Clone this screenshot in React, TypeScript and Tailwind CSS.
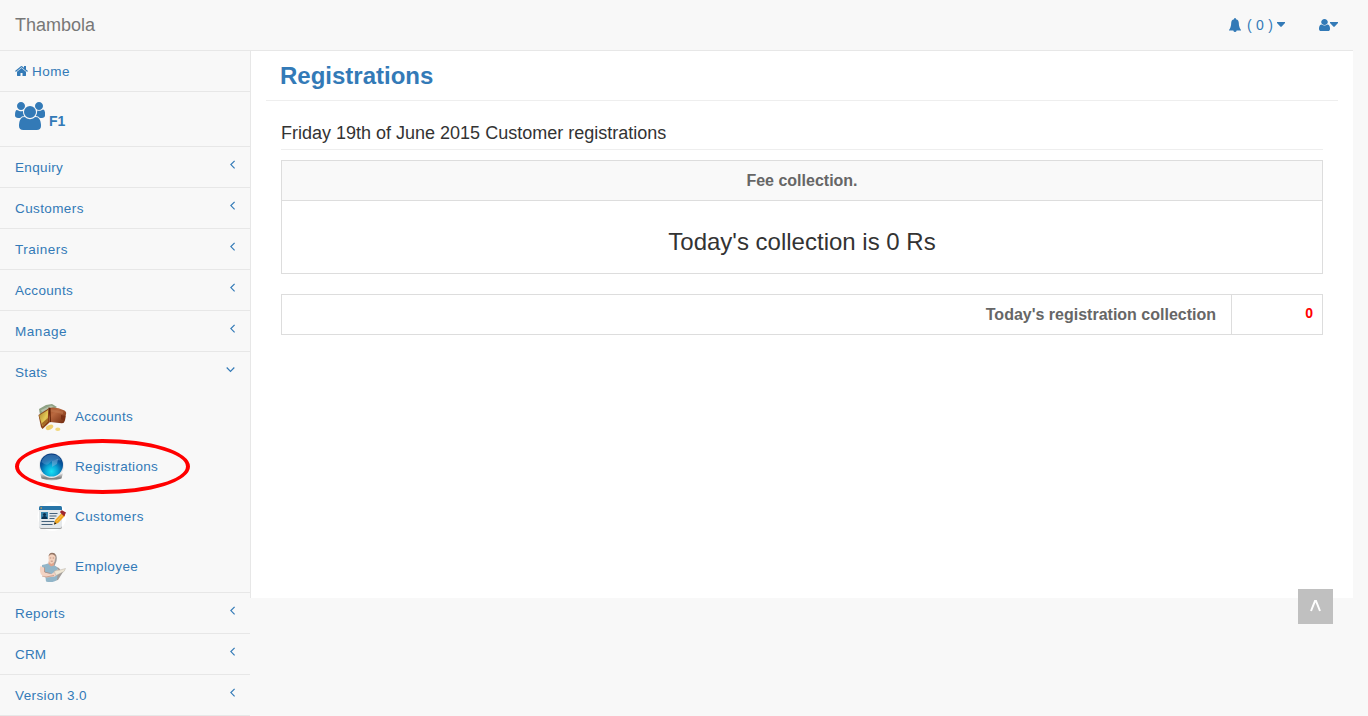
import React from "react";

function Chevron({ open }: { open?: boolean }) {
  return open ? (
    <svg width="9" height="10" viewBox="0 0 9 10" className="mr-[15px] mt-[13px]" fill="none" stroke="#337ab7" strokeWidth="1.2">
      <path d="M0.7 2.5 4.5 6.3 8.3 2.5" />
    </svg>
  ) : (
    <svg width="6" height="10" viewBox="0 0 6 10" className="mr-[14px] mt-[13px]" fill="none" stroke="#337ab7" strokeWidth="1.2">
      <path d="M4.600 0.900 0.900 4.600 4.600 8.300" />
    </svg>
  );
}

function Caret() {
  return (
    <svg width="8" height="5" viewBox="0 0 8 5" fill="#337ab7">
      <path d="M0 0h8v1L4.500 4.700h-1L0 1z" />
    </svg>
  );
}

function HomeIcon() {
  return (
    <svg width="13" height="14" viewBox="0 0 1664 1792" fill="#337ab7">
      <path d="M1408 992v480q0 26-19 45t-45 19h-384v-384h-256v384h-384q-26 0-45-19t-19-45v-480q0-1 .5-3t.5-3l575-474 575 474q1 2 1 6zm223-69l-62 74q-8 9-21 11h-3q-13 0-21-7l-692-577-692 577q-12 8-24 7-13-2-21-11l-62-74q-8-10-7-23.500t11-21.500l719-599q32-26 76-26t76 26l244 204v-195q0-14 9-23t23-9h192q14 0 23 9t9 23v408l219 182q10 8 11 21.500t-7 23.500z" />
    </svg>
  );
}

function UsersIcon() {
  return (
    <svg width="30" height="28" viewBox="0 -256 1920 1792" fill="#337ab7">
      <path d="M593 640q-162 5-265 128h-134q-82 0-138-40.500t-56-118.500q0-353 124-353 6 0 43.500 21t97.500 42.500 119 21.500q67 0 133-23-5 37-5 66 0 159 92 293zm1071 637q0 120-73 189.500t-194 69.500h-874q-121 0-194-69.500t-73-189.500q0-53 3.500-103.500t14-109 26.500-108.500 43-97.500 62-81 85.500-53.500 111.500-20q10 0 43 21.500t73 48 107 48 135 21.500 135-21.500 107-48 73-48 43-21.500q61 0 111.500 20t85.500 53.500 62 81 43 97.500 26.500 108.500 14 109 3.500 103.500zm-1024-1277q0 106-75 181t-181 75-181-75-75-181 75-181 181-75 181 75 75 181zm704 384q0 159-112.500 271.500t-271.500 112.500-271.500-112.500-112.500-271.500 112.500-271.500 271.500-112.500 271.500 112.500 112.500 271.500zm576 225q0 78-56 118.500t-138 40.500h-134q-103-123-265-128 92-134 92-293 0-29-5-66 66 23 133 23 59 0 119-21.500t97.500-42.500 43.500-21q124 0 124 353zm-128-609q0 106-75 181t-181 75-181-75-75-181 75-181 181-75 181 75 75 181z" />
    </svg>
  );
}

function UserIcon() {
  return (
    <svg width="11" height="14" viewBox="0 0 1280 1792" preserveAspectRatio="none" fill="#337ab7">
      <path d="M1280 1399q0 109-62.500 187t-150.500 78h-854q-88 0-150.500-78t-62.500-187q0-85 8.500-160.500t31.500-152 58.500-131 94-89 134.500-34.500q131 128 313 128t313-128q76 0 134.500 34.500t94 89 58.500 131 31.500 152 8.500 160.500zm-256-887q0 159-112.500 271.500t-271.500 112.500-271.500-112.500-112.500-271.500 112.500-271.500 271.500-112.500 271.500 112.500 112.500 271.500z" />
    </svg>
  );
}

function BellIcon() {
  return (
    <svg width="12" height="14" viewBox="0 0 12 14" fill="#337ab7">
      <path d="M5 1.200Q5 0 6 0t1 1.200C9 1.700 9.700 3 9.800 5c.1 2.500.5 4 1.200 5.400L12 12v.6H0V12l1-1.600C1.700 9 2.100 7.500 2.200 5 2.300 3 3 1.700 5 1.200zM4.300 12.500h3.400Q7.300 14 6 14t-1.700-1.500z" />
    </svg>
  );
}

function WalletIcon() {
  return (
    <svg width="30" height="30" viewBox="0 0 30 30">
      <defs>
        <linearGradient id="leather" x2="1" y2="1">
          <stop stopColor="#a4552c" />
          <stop offset=".35" stopColor="#b9683f" />
          <stop offset="1" stopColor="#6b260c" />
        </linearGradient>
        <linearGradient id="lining" x2="1" y2="1">
          <stop stopColor="#a5812a" />
          <stop offset=".6" stopColor="#e5ca58" />
          <stop offset="1" stopColor="#a77828" />
        </linearGradient>
      </defs>
      <path d="M2 7 9 3l6-1 5 3-6 4-11 4z" fill="#8fa285" />
      <path d="M4 8 14 3.500l3 1.500L5 10z" fill="#b4c1aa" />
      <path d="M1.500 13 11.500 6.500 13 20 5.500 27 4 25z" fill="#8c4219" />
      <path d="M2 13.500 11 8v11l-5.500 5.500z" fill="url(#lining)" />
      <path d="m5 21 6-5v3l-5.500 5.500z" fill="#a46a25" />
      <path d="M11.500 6q8-1.500 16 2.500 1.800 1 1.700 2.500l-1.500 8q-.5 2.500-3 2.300L13 20z" fill="url(#leather)" />
      <path d="m13 7 13 2.500V12L13 9.500z" fill="#c47b52" opacity=".5" />
      <path d="m24 13 4.500 1-.5 4.500-4-1z" fill="#7b3015" />
      <path d="M11.500 5.500 13 20l1 .3L13.500 6z" fill="#642509" />
      <ellipse cx="12.500" cy="25.300" rx="4" ry="2.300" fill="#efcf6e" transform="rotate(-25 12.500 25.300)" />
      <ellipse cx="20.800" cy="27.300" rx="2.600" ry="1.700" fill="#f2d77b" />
    </svg>
  );
}

function OrbIcon() {
  return (
    <svg width="30" height="30" viewBox="0 0 30 30">
      <defs>
        <radialGradient id="orb" cx=".5" cy=".78" r=".78">
          <stop stopColor="#18e2f4" />
          <stop offset=".35" stopColor="#0aa5d5" />
          <stop offset=".65" stopColor="#07599f" />
          <stop offset="1" stopColor="#06357a" />
        </radialGradient>
        <linearGradient id="stand" x2="0" y2="1">
          <stop stopColor="#eee" />
          <stop offset=".7" stopColor="#777" />
          <stop offset="1" stopColor="#ccc" />
        </linearGradient>
      </defs>
      <path d="M3 21q12 6 23 0l-1.500 5.500q-10 4-20 0z" fill="url(#stand)" />
      <circle cx="14.500" cy="13.500" r="12.500" fill="#e3e6e8" />
      <circle cx="14.500" cy="13" r="11.500" fill="url(#orb)" />
      <path d="M4.500 10Q7 2.200 14.500 2.500q8 0 9.500 6-8-2-12 3-3 3-7.500-1.500z" fill="#76b5e3" opacity=".35" />
      <path d="m15 9 6-2-1 5-5 3" fill="#88b9dd" opacity=".5" />
    </svg>
  );
}

function CardIcon() {
  return (
    <svg width="30" height="30" viewBox="0 0 30 30">
      <circle cx="15" cy="14.500" r="14.500" fill="#fff" />
      <rect x="2.500" y="6" width="22.500" height="21" rx="2" fill="#999" />
      <rect x="2" y="4" width="23" height="22" rx="2" fill="#e5e8ea" />
      <path d="M2 8V5.500Q2 4 3.500 4h20Q25 4 25 5.500V8z" fill="#2875a8" />
      <circle cx="4.200" cy="6" r=".8" fill="#f4a638" />
      <rect x="4" y="10" width="7" height="7" fill="#3b86ae" />
      <circle cx="7.500" cy="12.500" r="1.600" fill="#0b3150" />
      <path d="M4.700 17q0-3 2.800-3t2.800 3" fill="#0b3150" />
      <path d="M12.500 11.500h8m-8 2.500h7m-7 2.500h5M4.500 19.500h13M4.500 22.500h11" stroke="#44627c" strokeWidth="1" />
      <path d="m17 22.500 1.200-4.500 7-7.500 3 3-7 7.500z" fill="#f0a51d" />
      <path d="m19.500 19.300 7-7.500" stroke="#ffc45a" />
      <path d="m23.500 9 1.500-.8 4 2.300-1.800 4-4-4z" fill="#9d2730" />
      <path d="m17 22.500 .7-2.500 1.800 1.800z" fill="#222" />
    </svg>
  );
}

function EmployeeIcon() {
  return (
    <svg width="30" height="30" viewBox="0 0 30 30">
      <path d="M16 1q5 1 3.500 8l-2 5 4.500 2 2 3 2 1-5 8-8 1.500-2-8z" fill="#8b8581" opacity=".8" />
      <path d="M12 8h5v6l-3 3-3-4z" fill="#dfa48c" />
      <path d="M5 13q4-1 6-1.500l3 3 3-1q4 1 4 5l-1 9.500q-5 3.500-11 1.500L8 21l-3-4z" fill="#92b5c8" />
      <path d="M11.500 6q0-5 3.500-5t3.500 4l-1 5-3 2q-3-1-3-6z" fill="#f3d1bd" />
      <path d="M11.500 4.500q.5-3.500 3.500-3.800 4 0 3.800 4.300-1.500-2.700-3.800-2.700-2 0-3.500 2.200z" fill="#927565" />
      <path d="M12.800 6h1.400m1.500 0h1.400M13.800 9.200h2" stroke="#9b6759" strokeWidth=".6" />
      <path d="m3.500 14 4 2v4.500l7 1.500 6-4.500 3 1-5.500 6-8.500 1-5.500-3q-2-4.500-.5-8.500z" fill="#f4d3c3" />
      <path d="m17 19 6-1 5.500-1.500-1.500 3-8 4z" fill="#eee6d5" stroke="#aaa297" strokeWidth=".4" />
      <path d="m5 24 4 1 8-1.500m-9.500-8L7.500 20l6 1.500" stroke="#b77d68" fill="none" strokeWidth=".6" />
    </svg>
  );
}

function Row({ label, spacing, open }: { label: string; spacing: string; open?: boolean }) {
  return (
    <div className={`flex h-10 justify-between pl-[15px] ${open ? "" : "box-content border-b border-[#e7e7e7]"}`}>
      <span className={`pt-[11px] leading-5 ${spacing}`}>{label}</span>
      <Chevron open={open} />
    </div>
  );
}

function SubRow({ label, spacing, children }: { label: string; spacing: string; children: React.ReactNode }) {
  return (
    <div className="flex h-[50px] items-start pl-[37px] pt-[10px]">
      <span>{children}</span>
      <span className={`ml-2 mt-[5px] leading-5 ${spacing}`}>{label}</span>
    </div>
  );
}

export default function App() {
  return (
    <div className="h-[716px] w-[1368px] overflow-hidden bg-[#f8f8f8] font-['Liberation_Sans',Arial,sans-serif] text-[13.5px] text-[#337ab7]">
      <header className="flex h-[51px] w-[1353px] border-b border-[#e7e7e7]">
        <span className="pl-[15px] pt-[15px] text-[18px] leading-5 text-[#777]">Thambola</span>
        <div className="ml-auto flex pr-[15px]">
          <span className="mt-[18px]"><BellIcon /></span>
          <span className="ml-[6px] mt-[15px] w-[27px] whitespace-nowrap text-[14px] leading-5 tracking-[0.25px]">( 0 )</span>
          <span className="ml-[3px] mt-[22px]"><Caret /></span>
          <span className="ml-[34px] mt-[18px]"><UserIcon /></span>
          <span className="mt-[22px]"><Caret /></span>
        </div>
      </header>
      <div className="flex items-start">
        <nav className="relative w-[250px] shrink-0">
          <div className="flex h-[41px] border-b border-[#e7e7e7] pl-[15px] pt-[11px]">
            <span className="mt-[2px]"><HomeIcon /></span>
            <span className="ml-1 leading-5 tracking-[0.52px]">Home</span>
          </div>
          <div className="flex h-[55px] border-b border-[#e7e7e7] pl-[15px] pt-[10px]">
            <UsersIcon />
            <b className="ml-1 mt-[9px] text-[14px] leading-5">F1</b>
          </div>
          <Row label="Enquiry" spacing="tracking-[0.34px]" />
          <Row label="Customers" spacing="tracking-[0.39px]" />
          <Row label="Trainers" spacing="tracking-[0.5px]" />
          <Row label="Accounts" spacing="tracking-[0.31px]" />
          <Row label="Manage" spacing="tracking-[0.54px]" />
          <Row label="Stats" spacing="tracking-[0.32px]" open />
          <div className="h-[201px] border-b border-[#e7e7e7]">
            <SubRow label="Accounts" spacing="tracking-[0.31px]"><WalletIcon /></SubRow>
            <SubRow label="Registrations" spacing="tracking-[0.34px]"><OrbIcon /></SubRow>
            <SubRow label="Customers" spacing="tracking-[0.39px]"><CardIcon /></SubRow>
            <SubRow label="Employee" spacing="tracking-[0.4px]"><EmployeeIcon /></SubRow>
          </div>
          <Row label="Reports" spacing="tracking-[0.4px]" />
          <Row label="CRM" spacing="tracking-[0.15px]" />
          <Row label="Version 3.0" spacing="tracking-[0.4px]" />
          <div className="absolute left-[15px] top-[388px] h-[55px] w-[175px] rounded-[50%] border-4 border-[#f00]" />
        </nav>
        <main className="h-[547px] w-[1103px] border-l border-[#e7e7e7] bg-white px-[15px] text-[#333]">
          <h1 className="h-[50px] border-b border-[#eee] pl-[14px] pt-[10px] text-[24px] font-bold leading-[30px] text-[#337ab7]">Registrations</h1>
          <div className="px-[15px] pt-[22px]">
            <h2 className="h-[27px] border-b border-[#eee] text-[18px] leading-5">Friday 19th of June 2015 Customer registrations</h2>
            <section className="mt-[10px] h-[114px] border border-[#ddd] text-center">
              <div className="h-10 border-b border-[#ddd] bg-[#f9f9f9] text-[16px] font-bold leading-[39px] text-[#666]">Fee collection.</div>
              <div className="pt-[26px] text-[24px] leading-[30px]">Today's collection is 0 Rs</div>
            </section>
            <section className="mt-5 flex h-[41px] border border-[#ddd]">
              <div className="flex-1 pr-[15px] text-right text-[16px] font-bold leading-[39px] text-[#666]">Today's registration collection</div>
              <div className="w-[91px] border-l border-[#ddd] pr-[9px] text-right text-[14px] font-bold leading-9 text-[#f00]">0</div>
            </section>
          </div>
        </main>
      </div>
      <button aria-label="Back to top" className="absolute left-[1298px] top-[589px] h-[35px] w-[35px] bg-[#c0c0c0]">
        <svg width="35" height="35" viewBox="0 0 35 35" fill="none" stroke="#fff" strokeWidth="2"><path d="m13 22 4-10h1l4 10" /></svg>
      </button>
    </div>
  );
}
